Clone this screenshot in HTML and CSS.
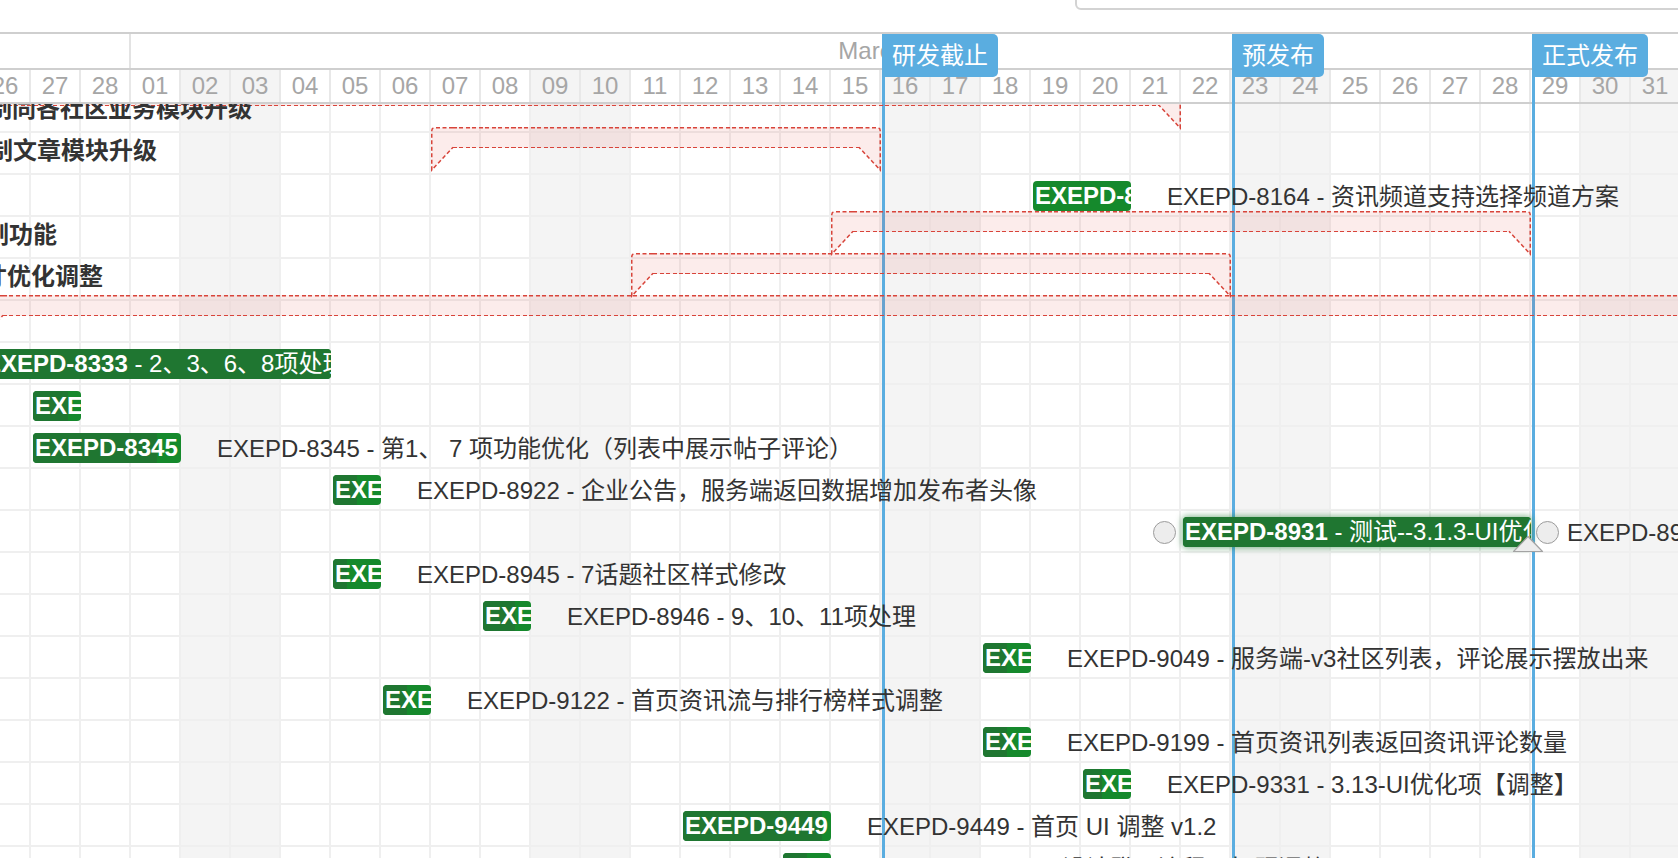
FILE: index.html
```html
<!DOCTYPE html>
<html lang="zh-CN">
<head>
    <meta charset="UTF-8">
    <meta name="viewport" content="width=device-width, initial-scale=1.0">
    <title>研发排期 - 甘特图</title>
    <link rel="stylesheet" href="styles.css">
</head>
<body>
    <!-- 工具栏 -->
    <div class="toolbar">
        <input class="search" type="text">
    </div>

    <!-- 甘特图 -->
    <div class="gantt">
        <!-- 时间刻度 -->
        <div class="scale">
            <div class="scale-months">
                <div class="month" style="width: 150px;"></div>
                <div class="month" style="width: 1550px;">March, 2019</div>
            </div>
            <div class="scale-days">
                <div class="day">26</div>
                <div class="day">27</div>
                <div class="day">28</div>
                <div class="day">01</div>
                <div class="day weekend">02</div>
                <div class="day weekend">03</div>
                <div class="day">04</div>
                <div class="day">05</div>
                <div class="day">06</div>
                <div class="day">07</div>
                <div class="day">08</div>
                <div class="day weekend">09</div>
                <div class="day weekend">10</div>
                <div class="day">11</div>
                <div class="day">12</div>
                <div class="day">13</div>
                <div class="day">14</div>
                <div class="day">15</div>
                <div class="day weekend">16</div>
                <div class="day weekend">17</div>
                <div class="day">18</div>
                <div class="day">19</div>
                <div class="day">20</div>
                <div class="day">21</div>
                <div class="day">22</div>
                <div class="day weekend">23</div>
                <div class="day weekend">24</div>
                <div class="day">25</div>
                <div class="day">26</div>
                <div class="day">27</div>
                <div class="day">28</div>
                <div class="day">29</div>
                <div class="day weekend">30</div>
                <div class="day weekend">31</div>
            </div>
        </div>

        <!-- 任务区域 -->
        <div class="data">
            <div class="canvas">
                <div class="cols">
                    <div></div><div></div><div></div><div></div>
                    <div class="weekend"></div><div class="weekend"></div>
                    <div></div><div></div><div></div><div></div><div></div>
                    <div class="weekend"></div><div class="weekend"></div>
                    <div></div><div></div><div></div><div></div><div></div>
                    <div class="weekend"></div><div class="weekend"></div>
                    <div></div><div></div><div></div><div></div><div></div>
                    <div class="weekend"></div><div class="weekend"></div>
                    <div></div><div></div><div></div><div></div><div></div>
                    <div class="weekend"></div><div class="weekend"></div>
                </div>
                <div class="rows">
                    <div></div><div></div><div></div><div></div><div></div>
                    <div></div><div></div><div></div><div></div><div></div>
                    <div></div><div></div><div></div><div></div><div></div>
                    <div></div><div></div><div></div><div></div>
                </div>

                <div class="tasks">
                    <!-- 项目（汇总） -->
                    <div class="summary" style="grid-row: 1; grid-column: 1 / 25; margin-left: -60px;">
                        <svg class="tip" width="22" height="44"><path class="tip-fill" d="M0.75 43 V4 Q0.75 0.75 4 0.75 H22 V20.25 Z"/><path class="tip-line" d="M22 0.75 H4 Q0.75 0.75 0.75 4 V43 L22 20.25"/></svg>
                        <div class="band"></div>
                        <svg class="tip" width="22" height="44"><path class="tip-fill" d="M0 0.75 H18 Q21.25 0.75 21.25 4 V43 L0 20.25 Z"/><path class="tip-line" d="M0 0.75 H18 Q21.25 0.75 21.25 4 V43 L0 20.25"/></svg>
                    </div>
                    <div class="title" style="grid-row: 1; width: 271px;">复制同各社区业务模块升级</div>

                    <div class="summary" style="grid-row: 2; grid-column: 10 / 19;">
                        <svg class="tip" width="22" height="44"><path class="tip-fill" d="M0.75 43 V4 Q0.75 0.75 4 0.75 H22 V20.25 Z"/><path class="tip-line" d="M22 0.75 H4 Q0.75 0.75 0.75 4 V43 L22 20.25"/></svg>
                        <div class="band"></div>
                        <svg class="tip" width="22" height="44"><path class="tip-fill" d="M0 0.75 H18 Q21.25 0.75 21.25 4 V43 L0 20.25 Z"/><path class="tip-line" d="M0 0.75 H18 Q21.25 0.75 21.25 4 V43 L0 20.25"/></svg>
                    </div>
                    <div class="title" style="grid-row: 2; width: 176px;">复制文章模块升级</div>

                    <div class="bar" style="grid-row: 3; grid-column: 22 / 24;">
                        <div class="bar-inner"><div class="progress" style="width: 0%;"></div><span class="bar-text"><b>EXEPD-8164</b> - 资讯频道支持选择频道方案</span></div>
                    </div>
                    <div class="label" style="grid-row: 3; grid-column: 24 / -1;">EXEPD-8164 - 资讯频道支持选择频道方案</div>

                    <div class="summary" style="grid-row: 4; grid-column: 18 / 32;">
                        <svg class="tip" width="22" height="44"><path class="tip-fill" d="M0.75 43 V4 Q0.75 0.75 4 0.75 H22 V20.25 Z"/><path class="tip-line" d="M22 0.75 H4 Q0.75 0.75 0.75 4 V43 L22 20.25"/></svg>
                        <div class="band"></div>
                        <svg class="tip" width="22" height="44"><path class="tip-fill" d="M0 0.75 H18 Q21.25 0.75 21.25 4 V43 L0 20.25 Z"/><path class="tip-line" d="M0 0.75 H18 Q21.25 0.75 21.25 4 V43 L0 20.25"/></svg>
                    </div>
                    <div class="title" style="grid-row: 4; width: 76px;">复制功能</div>

                    <div class="summary" style="grid-row: 5; grid-column: 14 / 26;">
                        <svg class="tip" width="22" height="44"><path class="tip-fill" d="M0.75 43 V4 Q0.75 0.75 4 0.75 H22 V20.25 Z"/><path class="tip-line" d="M22 0.75 H4 Q0.75 0.75 0.75 4 V43 L22 20.25"/></svg>
                        <div class="band"></div>
                        <svg class="tip" width="22" height="44"><path class="tip-fill" d="M0 0.75 H18 Q21.25 0.75 21.25 4 V43 L0 20.25 Z"/><path class="tip-line" d="M0 0.75 H18 Q21.25 0.75 21.25 4 V43 L0 20.25"/></svg>
                    </div>
                    <div class="title" style="grid-row: 5; width: 122px;">尺寸优化调整</div>

                    <div class="summary" style="grid-row: 6; grid-column: 1 / -1; margin-right: -60px;">
                        <svg class="tip" width="22" height="44"><path class="tip-fill" d="M0.75 43 V4 Q0.75 0.75 4 0.75 H22 V20.25 Z"/><path class="tip-line" d="M22 0.75 H4 Q0.75 0.75 0.75 4 V43 L22 20.25"/></svg>
                        <div class="band"></div>
                        <svg class="tip" width="22" height="44"><path class="tip-fill" d="M0 0.75 H18 Q21.25 0.75 21.25 4 V43 L0 20.25 Z"/><path class="tip-line" d="M0 0.75 H18 Q21.25 0.75 21.25 4 V43 L0 20.25"/></svg>
                    </div>

                    <!-- 任务 -->
                    <div class="bar" style="grid-row: 7; grid-column: 1 / 8;">
                        <div class="bar-inner"><div class="progress" style="width: 100%;"></div><span class="bar-text"><b>EXEPD-8333</b> - 2、3、6、8项处理</span></div>
                    </div>

                    <div class="bar" style="grid-row: 8; grid-column: 2 / 3;">
                        <div class="bar-inner"><div class="progress" style="width: 72%;"></div><span class="bar-text"><b>EXEPD-8334</b> - 4、5项处理</span></div>
                    </div>

                    <div class="bar" style="grid-row: 9; grid-column: 2 / 5;">
                        <div class="bar-inner"><div class="progress" style="width: 84%;"></div><span class="bar-text"><b>EXEPD-8345</b> - 第1、 7 项功能优化</span></div>
                    </div>
                    <div class="label" style="grid-row: 9; grid-column: 5 / -1;">EXEPD-8345 - 第1、 7 项功能优化（列表中展示帖子评论）</div>

                    <div class="bar" style="grid-row: 10; grid-column: 8 / 9;">
                        <div class="bar-inner"><div class="progress" style="width: 50%;"></div><span class="bar-text"><b>EXEPD-8922</b> - 企业公告</span></div>
                    </div>
                    <div class="label" style="grid-row: 10; grid-column: 9 / -1;">EXEPD-8922 - 企业公告，服务端返回数据增加发布者头像</div>

                    <div class="bar selected" style="grid-row: 11; grid-column: 25 / 32;">
                        <div class="bar-inner"><div class="progress" style="width: 100%;"></div><span class="bar-text"><b>EXEPD-8931</b> - 测试--3.1.3-UI优化项调整</span></div>
                        <span class="link-point start"></span>
                        <span class="link-point end"></span>
                        <svg class="progress-drag" width="32" height="18" viewBox="0 0 32 18"><path d="M16 1.5 L30.5 16.5 H1.5 Z"/></svg>
                    </div>
                    <div class="label" style="grid-row: 11; grid-column: 32 / -1;">EXEPD-8931 - 测试--3.1.3-UI优化项调整</div>

                    <div class="bar" style="grid-row: 12; grid-column: 8 / 9;">
                        <div class="bar-inner"><div class="progress" style="width: 30%;"></div><span class="bar-text"><b>EXEPD-8945</b> - 7话题社区样式修改</span></div>
                    </div>
                    <div class="label" style="grid-row: 12; grid-column: 9 / -1;">EXEPD-8945 - 7话题社区样式修改</div>

                    <div class="bar" style="grid-row: 13; grid-column: 11 / 12;">
                        <div class="bar-inner"><div class="progress" style="width: 66%;"></div><span class="bar-text"><b>EXEPD-8946</b> - 9、10、11项处理</span></div>
                    </div>
                    <div class="label" style="grid-row: 13; grid-column: 12 / -1;">EXEPD-8946 - 9、10、11项处理</div>

                    <div class="bar" style="grid-row: 14; grid-column: 21 / 22;">
                        <div class="bar-inner"><div class="progress" style="width: 50%;"></div><span class="bar-text"><b>EXEPD-9049</b> - 服务端-v3社区列表</span></div>
                    </div>
                    <div class="label" style="grid-row: 14; grid-column: 22 / -1;">EXEPD-9049 - 服务端-v3社区列表，评论展示摆放出来</div>

                    <div class="bar" style="grid-row: 15; grid-column: 9 / 10;">
                        <div class="bar-inner"><div class="progress" style="width: 50%;"></div><span class="bar-text"><b>EXEPD-9122</b> - 首页资讯流</span></div>
                    </div>
                    <div class="label" style="grid-row: 15; grid-column: 10 / -1;">EXEPD-9122 - 首页资讯流与排行榜样式调整</div>

                    <div class="bar" style="grid-row: 16; grid-column: 21 / 22;">
                        <div class="bar-inner"><div class="progress" style="width: 50%;"></div><span class="bar-text"><b>EXEPD-9199</b> - 首页资讯列表</span></div>
                    </div>
                    <div class="label" style="grid-row: 16; grid-column: 22 / -1;">EXEPD-9199 - 首页资讯列表返回资讯评论数量</div>

                    <div class="bar" style="grid-row: 17; grid-column: 23 / 24;">
                        <div class="bar-inner"><div class="progress" style="width: 40%;"></div><span class="bar-text"><b>EXEPD-9331</b> - 3.13-UI优化项</span></div>
                    </div>
                    <div class="label" style="grid-row: 17; grid-column: 24 / -1;">EXEPD-9331 - 3.13-UI优化项【调整】</div>

                    <div class="bar" style="grid-row: 18; grid-column: 15 / 18;">
                        <div class="bar-inner"><div class="progress" style="width: 94%;"></div><span class="bar-text"><b>EXEPD-9449</b> - 首页 UI 调整 v1.2</span></div>
                    </div>
                    <div class="label" style="grid-row: 18; grid-column: 18 / -1;">EXEPD-9449 - 首页 UI 调整 v1.2</div>

                    <div class="bar" style="grid-row: 19; grid-column: 17 / 18;">
                        <div class="bar-inner"><div class="progress" style="width: 50%;"></div><span class="bar-text"><b>EXEPD-9502</b> - H5设计</span></div>
                    </div>
                    <div class="label" style="grid-row: 19; grid-column: 18 / -1;">EXEPD-9502 - H5设计登录流程页标题调整</div>
                </div>
            </div>
        </div>

        <!-- 里程碑标记 -->
        <div class="marker" style="left: 882px;"><span class="marker-label">研发截止</span></div>
        <div class="marker" style="left: 1232px;"><span class="marker-label">预发布</span></div>
        <div class="marker" style="left: 1532px;"><span class="marker-label">正式发布</span></div>
    </div>
</body>
</html>
```

FILE: styles.css
```css
* {
    margin: 0;
    padding: 0;
    box-sizing: border-box;
    font-family: 'Liberation Sans', 'Noto Sans CJK SC', sans-serif;
}

body {
    background-color: #fff;
    overflow: hidden;
    font-size: 24px;
    color: #333;
}

/* 工具栏 */
.toolbar {
    display: flex;
    justify-content: flex-end;
    height: 32px;
}

.search {
    width: 640px;
    height: 42px;
    margin: -32px -37px 0 0;
    border: 2px solid #d3d3d3;
    border-radius: 6px;
    background-color: #fff;
}

/* 甘特图 */
.gantt {
    position: relative;
    border-top: 2px solid #cfcfcf;
}

.scale-months,
.scale-days {
    display: flex;
    margin-left: -19px;
}

.scale-months {
    height: 36px;
    border-bottom: 2px solid #cfcfcf;
}

.month {
    flex: none;
    border-right: 2px solid #e3e3e3;
    text-align: center;
    line-height: 34px;
    color: #a6a6a6;
}

.scale-days {
    height: 34px;
    border-bottom: 2px solid #cfcfcf;
}

.day {
    flex: none;
    width: 50px;
    border-right: 2px solid #e8e8e8;
    text-align: center;
    line-height: 32px;
    color: #a6a6a6;
}

.day.weekend {
    background-color: #f4f4f4;
}

.data {
    height: 754px;
    overflow: hidden;
}

.canvas {
    display: grid;
    width: 1700px;
    margin: -13px 0 0 -19px;
}

.cols,
.rows,
.tasks {
    grid-area: 1 / 1;
}

.cols {
    display: flex;
}

.cols div {
    flex: none;
    width: 50px;
    border-right: 2px solid #efefef;
}

.cols .weekend {
    background-color: #f4f4f4;
}

.rows div {
    height: 42px;
    border-bottom: 2px solid #efefef;
}

.tasks {
    display: grid;
    grid-template-columns: repeat(34, 50px);
    grid-template-rows: repeat(19, 42px);
    position: relative;
    z-index: 2;
}

/* 项目汇总条 */
.summary {
    display: flex;
    align-items: flex-start;
    align-self: start;
    height: 44px;
    margin-top: -6px;
}

.summary .tip {
    flex: none;
    overflow: visible;
}

.tip-fill {
    fill: rgba(222, 68, 58, 0.1);
}

.tip-line {
    fill: none;
    stroke: #d8443a;
    stroke-width: 1.5;
    stroke-dasharray: 4 2.5;
}

.summary .band {
    flex: 1;
    height: 21px;
    background:
        repeating-linear-gradient(90deg, #d8443a 0 4px, transparent 4px 6.5px) left top / 100% 1.5px no-repeat,
        repeating-linear-gradient(90deg, #d8443a 0 4px, transparent 4px 6.5px) left bottom / 100% 1.5px no-repeat,
        rgba(222, 68, 58, 0.1);
}

.title {
    grid-column: 1 / -1;
    justify-self: start;
    align-self: center;
    display: flex;
    justify-content: flex-end;
    margin-bottom: 11px;
    white-space: nowrap;
    font-weight: bold;
    color: #333;
}

/* 任务条 */
.bar {
    position: relative;
    align-self: start;
    height: 30px;
    margin: 6px 0 0 2px;
}

.bar-inner {
    position: relative;
    height: 100%;
    overflow: hidden;
    border-radius: 4px;
    background-color: #15892c;
}

.bar .progress {
    position: absolute;
    top: 0;
    left: 0;
    bottom: 0;
    background-color: #1f7631;
}

.bar-text {
    position: relative;
    display: block;
    padding-left: 2px;
    line-height: 30px;
    white-space: nowrap;
    color: #fff;
}

.bar.selected .bar-inner {
    box-shadow: 0 0 6px 1px rgba(25, 120, 45, 0.55);
}

.link-point {
    position: absolute;
    top: 50%;
    width: 23px;
    height: 23px;
    margin-top: -11.5px;
    border-radius: 50%;
    background-color: #ededed;
    border: 1.5px solid #9c9c9c;
}

.link-point.start {
    left: -30px;
}

.link-point.end {
    right: -27.5px;
}

.progress-drag {
    position: absolute;
    top: 18px;
    right: -13px;
}

.progress-drag path {
    fill: #ededed;
    stroke: #a3a3a3;
    stroke-width: 1.2;
    stroke-linejoin: round;
}

.label {
    align-self: center;
    margin: 0 0 4px 36px;
    white-space: nowrap;
    color: #333;
}

/* 里程碑标记 */
.marker {
    position: absolute;
    top: 0;
    bottom: 0;
    width: 3px;
    background-color: #5aade0;
    z-index: 1;
}

.marker-label {
    position: absolute;
    top: 0;
    left: 0;
    height: 43px;
    padding: 0 10px;
    line-height: 43px;
    white-space: nowrap;
    color: #fff;
    background-color: #5aade0;
    border-radius: 0 5px 5px 0;
}
```
